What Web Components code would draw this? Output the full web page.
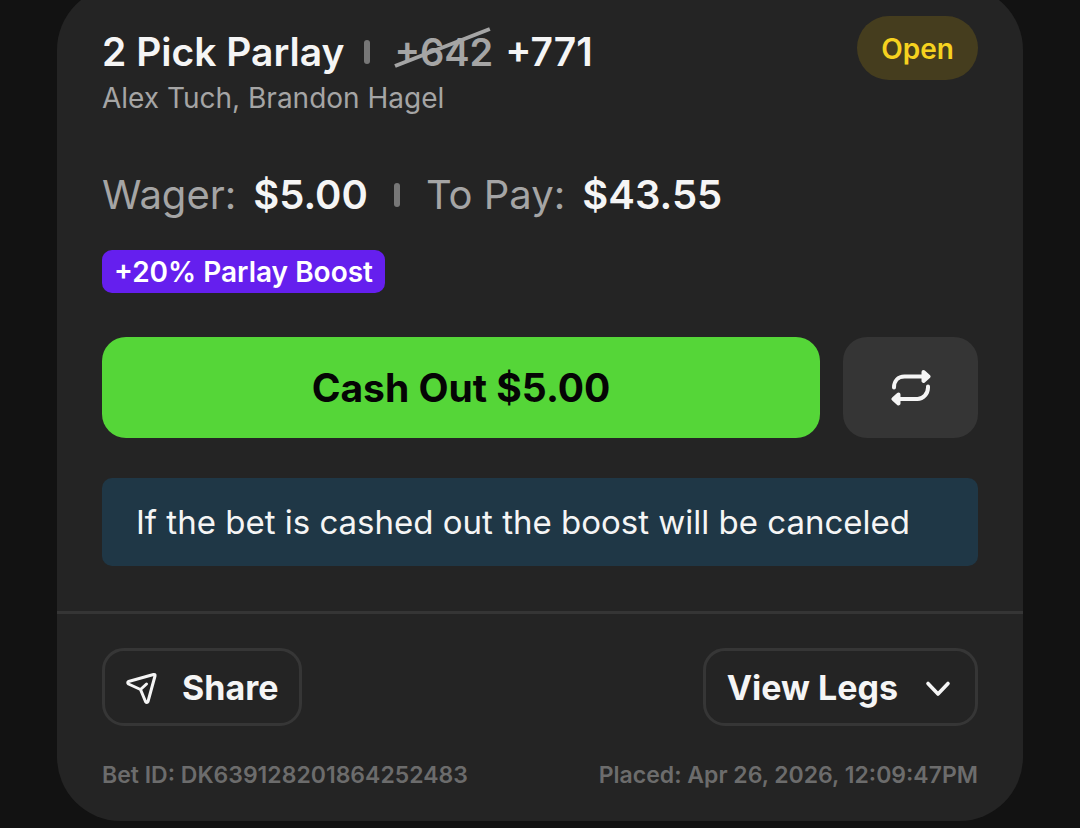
<!DOCTYPE html>
<html lang="en">
<head>
<meta charset="utf-8">
<meta name="viewport" content="width=device-width, initial-scale=1">
<title>My Bets</title>
<style>
  body {
    margin: 0;
    background: #121212;
    color: #f5f5f5;
    font-family: Inter, "Liberation Sans", sans-serif;
    font-optical-sizing: none;
    overflow: hidden;
  }
</style>
</head>
<body>
<bet-card>
  <bet-title slot="header" was="+642" odds="+771" picks="Alex Tuch, Brandon Hagel">2 Pick Parlay</bet-title>
  <bet-status slot="header">Open</bet-status>

  <bet-amounts wager="$5.00" pay="$43.55"></bet-amounts>
  <bet-boost>+20% Parlay Boost</bet-boost>
  <cash-out>Cash Out $5.00</cash-out>
  <bet-notice>If the bet is cashed out the boost will be canceled</bet-notice>

  <outline-button slot="actions">
    <svg slot="before" width="32" height="32" viewBox="0 0 32 32" fill="none" stroke="currentColor" stroke-width="3" stroke-linejoin="round" stroke-linecap="round"><path d="M2.500 9.500 27.500 2.500Q29.500 2 29 4L22 29.500Q21 31.500 19.500 29.500L14.500 17.500 2.500 12Q1 10.500 2.500 9.500ZM14.500 17.500 20.500 12"/></svg>
    Share
  </outline-button>
  <outline-button slot="actions">
    View Legs
    <svg slot="after" width="32" height="32" viewBox="0 0 32 32" fill="none" stroke="currentColor" stroke-width="3.600" stroke-linejoin="round" stroke-linecap="round"><path d="M6 11.500 16 22 26 11.500"/></svg>
  </outline-button>

  <span slot="footer">Bet ID: DK639128201864252483</span>
  <span slot="footer">Placed: Apr 26, 2026, 12:09:47PM</span>
</bet-card>

<script>
  const define = (name, html) => customElements.define(name,
    class extends HTMLElement {
      constructor() {
        super();

        this.attachShadow({ mode: 'open' });
        this.shadowRoot.innerHTML = html;
      }

      connectedCallback() {
        this.shadowRoot.querySelectorAll('[data-attr]').forEach((el) => {
          el.textContent = this.getAttribute(el.dataset.attr);
        });
      }
    }
  );

  define('bet-card', `
    <style>
      :host {
        display: block;
        margin: -14px 57px 0;
        border-radius: 64px;
        background: #242424;
      }
      .main { padding: 30px 45px 45px; }
      header, .actions, footer { display: flex; justify-content: space-between; align-items: flex-start; }
      header { margin-bottom: 55px; }
      .bottom { padding: 34px 45px 32px; border-top: 3px solid #353535; }
      footer {
        margin-top: 35px;
        color: #6c6c6c;
        font-size: 23px;
        font-weight: 600;
        line-height: 28px;
      }
    </style>
    <article>
      <div class="main">
        <header><slot name="header"></slot></header>
        <slot></slot>
      </div>
      <div class="bottom">
        <div class="actions"><slot name="actions"></slot></div>
        <footer><slot name="footer"></slot></footer>
      </div>
    </article>
  `);

  define('bar-divider', `
    <style>
      :host {
        display: block;
        width: 6px;
        height: 24px;
        border-radius: 3px;
        background: #777;
      }
    </style>
  `);

  define('bet-title', `
    <style>
      :host { display: block; padding-top: 12px; }
      .line { display: flex; align-items: center; font-size: 39px; font-weight: 600; line-height: 48px; }
      h2 { margin: 0; font: inherit; }
      bar-divider { margin: 0 24px 0 20px; }
      s { position: relative; margin-right: 12px; color: #a5a5a5; font-size: 38px; text-decoration: none; }
      svg { position: absolute; left: 0; top: 0; width: 100%; height: 100%; }
      p { margin: 4px 0 0; color: #a5a5a5; font-size: 28px; line-height: 36px; }
    </style>
    <div class="line">
      <h2><slot></slot></h2>
      <bar-divider></bar-divider>
      <s><span data-attr="was"></span><svg viewBox="0 0 98 48" preserveAspectRatio="none" overflow="visible" stroke="#a5a5a5" stroke-width="4"><path d="M1 38 95 1"/></svg></s>
      <span data-attr="odds"></span>
    </div>
    <p data-attr="picks"></p>
  `);

  define('bet-status', `
    <style>
      :host {
        display: block;
        padding: 15px 24px 13px;
        border-radius: 32px;
        background: #453d1e;
        color: #f6d21f;
        font-size: 28px;
        font-weight: 600;
        line-height: 36px;
      }
    </style>
    <slot></slot>
  `);

  define('bet-amounts', `
    <style>
      :host {
        display: flex;
        align-items: center;
        margin-bottom: 31px;
        color: #a5a5a5;
        font-size: 40px;
        line-height: 48px;
      }
      b { margin-left: 17px; color: #f5f5f5; font-weight: 600; }
      bar-divider { margin: 0 26px; }
    </style>
    <span>Wager:</span><b data-attr="wager"></b>
    <bar-divider></bar-divider>
    <span>To Pay:</span><b data-attr="pay"></b>
  `);

  define('bet-boost', `
    <style>
      :host {
        display: block;
        width: fit-content;
        padding: 4px 12px 3px;
        border-radius: 10px;
        background: #651fee;
        color: #fff;
        font-size: 28px;
        font-weight: 600;
        line-height: 36px;
      }
    </style>
    <slot></slot>
  `);

  define('cash-out', `
    <style>
      :host { display: flex; gap: 23px; margin: 44px 0 40px; }
      button {
        display: flex;
        align-items: center;
        justify-content: center;
        height: 101px;
        padding: 0;
        border: 0;
        border-radius: 24px;
        font: 700 39px/48px Inter, "Liberation Sans", sans-serif;
        font-optical-sizing: none;
        cursor: pointer;
      }
      .cash { flex: 1; background: #55d638; color: #050505; }
      .rebet { width: 135px; background: #353535; color: #f5f5f5; }
    </style>
    <button class="cash" type="button"><slot></slot></button>
    <button class="rebet" type="button" aria-label="Bet again">
      <svg width="40" height="40" viewBox="0 0 40 40" fill="none" stroke="currentColor" stroke-width="4" stroke-linecap="round" stroke-linejoin="round">
        <path d="M3 19.500C3 13 7 8.500 13.500 8.500H33M37 18.500V19.500C37 26 32 31 26.500 31H7"/>
        <path fill="currentColor" d="M32.500 4 37.500 8.500 32.500 13ZM7.500 26.500 2.500 31 7.500 35.500Z"/>
      </svg>
    </button>
  `);

  define('bet-notice', `
    <style>
      :host {
        display: block;
        padding: 22px 34px;
        border-radius: 10px;
        background: #1f3746;
        color: #f5f5f5;
        font-size: 33px;
        line-height: 44px;
      }
    </style>
    <slot></slot>
  `);

  define('outline-button', `
    <style>
      :host { display: block; }
      button {
        display: flex;
        align-items: center;
        gap: 24px;
        height: 78px;
        padding: 1px 21px 0;
        border: 3px solid #363636;
        border-radius: 22px;
        background: none;
        color: #f5f5f5;
        font: 700 34px/44px Inter, "Liberation Sans", sans-serif;
        cursor: pointer;
      }
    </style>
    <button type="button"><slot name="before"></slot><span><slot></slot></span><slot name="after"></slot></button>
  `);
</script>
</body>
</html>
